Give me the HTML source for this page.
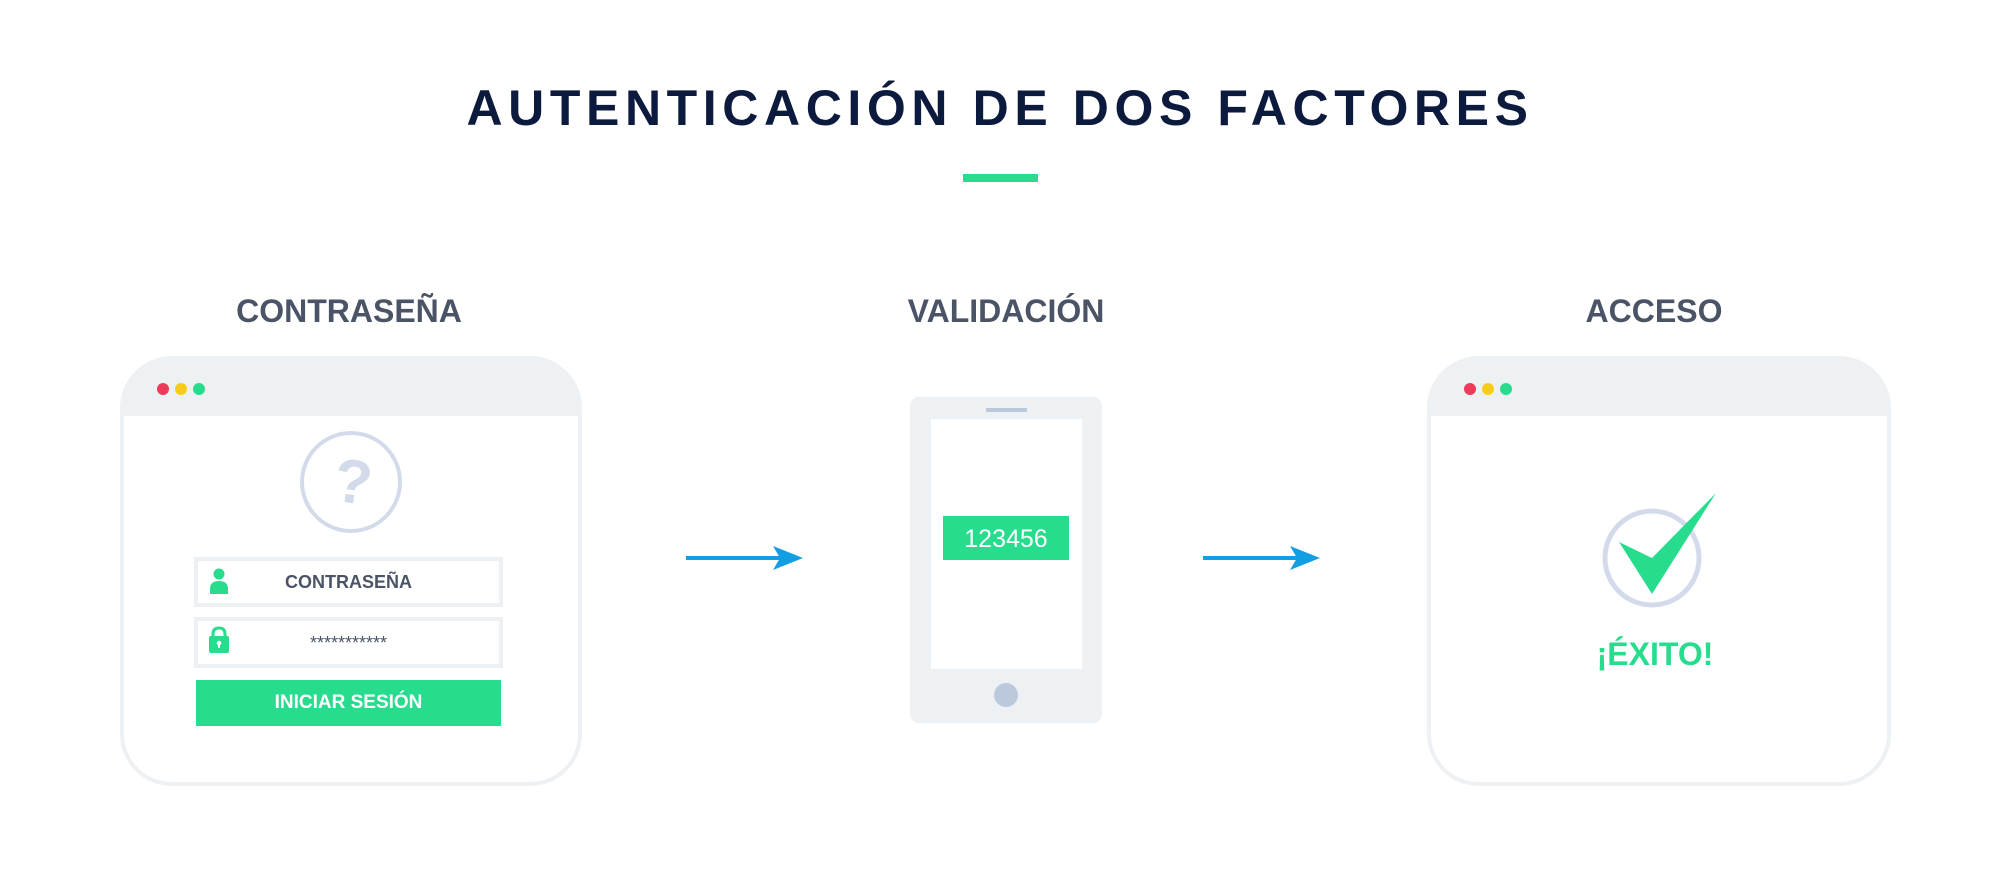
<!DOCTYPE html>
<html><head><meta charset="utf-8"><style>
*{margin:0;padding:0;box-sizing:border-box}
body{width:2000px;height:875px;background:#fff;position:relative;overflow:hidden;font-family:"Liberation Sans",sans-serif}
.a{position:absolute}
.t{position:absolute;text-align:center;white-space:nowrap;font-weight:700}
.win{position:absolute;border:4px solid #edf1f4;border-radius:52px;background:#fff;overflow:hidden}
.hdr{position:absolute;left:0;top:0;right:0;height:56px;background:#edf1f4}
.dot{position:absolute;width:12px;height:12px;border-radius:50%;top:23px}
.field{position:absolute;border:4px solid #edf1f4;background:#fff}
</style></head><body>

<div class="t" style="left:0;width:2000px;top:80px;font-size:50px;line-height:56px;color:#0c1a3e;letter-spacing:5.6px;font-weight:700">AUTENTICACIÓN DE DOS FACTORES</div>
<div class="a" style="left:963px;top:174px;width:75px;height:8px;background:#28dc8e"></div>

<div class="t" style="left:149px;width:400px;top:292px;font-size:32px;line-height:38px;color:#4a5466">CONTRASEÑA</div>
<div class="t" style="left:806px;width:400px;top:292px;font-size:32px;line-height:38px;color:#4a5466">VALIDACIÓN</div>
<div class="t" style="left:1454px;width:400px;top:292px;font-size:32px;line-height:38px;color:#4a5466">ACCESO</div>

<!-- left window -->
<div class="win" style="left:120px;top:356px;width:462px;height:430px">
  <div class="hdr"></div>
  <div class="dot" style="left:33px;background:#ef3b5b"></div>
  <div class="dot" style="left:51px;background:#f7cc19"></div>
  <div class="dot" style="left:69px;background:#28dc8e"></div>
</div>
<svg class="a" style="left:290px;top:420px" width="124" height="124" viewBox="0 0 124 124">
  <circle cx="61" cy="62" r="49" fill="none" stroke="#d3dbea" stroke-width="4"/>
  <text x="63" y="83" text-anchor="middle" font-family="Liberation Sans" font-weight="700" font-size="62" fill="#d3dbea" transform="rotate(8 63 62)">?</text>
</svg>
<div class="field" style="left:194px;top:557px;width:309px;height:50px"></div>
<div class="t" style="left:194px;width:309px;top:571px;font-size:18px;line-height:22px;color:#4a5466">CONTRASEÑA</div>
<svg class="a" style="left:209px;top:568px" width="20" height="28" viewBox="0 0 20 28">
  <circle cx="10" cy="6" r="5.5" fill="#28dc8e"/>
  <path d="M1 26 V21 Q1 13 10 13 Q19 13 19 21 V26 Z" fill="#28dc8e"/>
</svg>
<div class="field" style="left:194px;top:617px;width:309px;height:51px"></div>
<div class="t" style="left:194px;width:309px;top:632px;font-size:18px;line-height:22px;color:#4a5466;font-weight:400">***********</div>
<svg class="a" style="left:208px;top:626px" width="22" height="28" viewBox="0 0 22 28">
  <path d="M5 11 V8 Q5 2 11 2 Q17 2 17 8 V11" fill="none" stroke="#28dc8e" stroke-width="3"/>
  <rect x="1" y="10" width="20" height="17" rx="2" fill="#28dc8e"/>
  <circle cx="11" cy="17" r="2.3" fill="#fff"/>
  <rect x="10" y="17" width="2" height="5" fill="#fff"/>
</svg>
<div class="a" style="left:196px;top:680px;width:305px;height:46px;background:#28dc8e"></div>
<div class="t" style="left:196px;width:305px;top:692px;font-size:19px;line-height:22px;color:#fff">INICIAR SESIÓN</div>

<!-- arrows -->
<svg class="a" style="left:684px;top:543px" width="124" height="30" viewBox="0 0 124 30">
  <rect x="2" y="13" width="96" height="4" fill="#139de3"/>
  <path d="M89 3 L119 15 L89 27 L96 15 Z" fill="#139de3"/>
</svg>
<svg class="a" style="left:1201px;top:543px" width="124" height="30" viewBox="0 0 124 30">
  <rect x="2" y="13" width="96" height="4" fill="#139de3"/>
  <path d="M89 3 L119 15 L89 27 L96 15 Z" fill="#139de3"/>
</svg>

<!-- phone -->
<div class="a" style="left:910px;top:397px;width:192px;height:326px;background:#edf1f4;border-radius:9px"></div>
<div class="a" style="left:931px;top:419px;width:151px;height:250px;background:#fff"></div>
<div class="a" style="left:986px;top:408px;width:41px;height:4px;background:#bcc8dc"></div>
<div class="a" style="left:994px;top:683px;width:24px;height:24px;border-radius:50%;background:#bcc8dc"></div>
<div class="a" style="left:943px;top:516px;width:126px;height:44px;background:#28dc8e"></div>
<div class="t" style="left:943px;width:126px;top:524px;font-size:25px;line-height:30px;color:#fff;font-weight:400">123456</div>

<!-- right window -->
<div class="win" style="left:1427px;top:356px;width:464px;height:430px">
  <div class="hdr"></div>
  <div class="dot" style="left:33px;background:#ef3b5b"></div>
  <div class="dot" style="left:51px;background:#f7cc19"></div>
  <div class="dot" style="left:69px;background:#28dc8e"></div>
</div>
<svg class="a" style="left:1590px;top:480px" width="140" height="130" viewBox="1590 480 140 130">
  <circle cx="1652" cy="558" r="47" fill="none" stroke="#d3dbea" stroke-width="5"/>
  <path d="M1619 542 L1652 558 L1716 493 L1652 594 Z" fill="#28dc8e"/>
</svg>
<div class="t" style="left:1505px;width:300px;top:636px;font-size:32px;line-height:36px;color:#28dc8e">¡ÉXITO!</div>

</body></html>
